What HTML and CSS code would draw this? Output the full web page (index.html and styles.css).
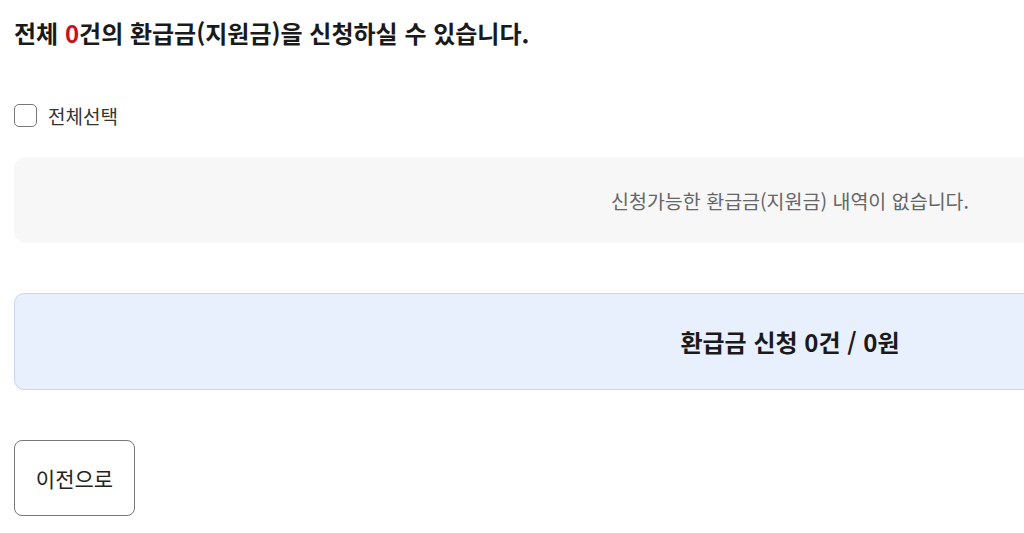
FILE: index.html
```html
<!DOCTYPE html>
<html lang="ko">
<head>
<meta charset="utf-8">
<title>환급금 신청</title>
<link rel="stylesheet" href="styles.css">
</head>
<body>
<main class="page">
  <h1 class="title">전체 <span class="count">0</span>건의 환급금(지원금)을 신청하실 수 있습니다.</h1>
  <label class="check-all">
    <span class="box"></span>
    <span class="check-label">전체선택</span>
  </label>
  <div class="empty">신청가능한 환급금(지원금) 내역이 없습니다.</div>
  <div class="summary">환급금 신청 0건 / 0원</div>
  <button class="prev" type="button">이전으로</button>
</main>
</body>
</html>
```
FILE: styles.css
```css
html, body {
  margin: 0;
  padding: 0;
  background: #fff;
  overflow: hidden;
}
body {
  font-family: "Noto Sans CJK KR", "Noto Sans", sans-serif;
  color: #222;
}
.page {
  width: 1552px;
  padding: 15px 0 0 14px;
  display: flex;
  flex-direction: column;
  align-items: flex-start;
}
.title {
  margin: 0;
  font-size: 24px;
  line-height: 36px;
  font-weight: 700;
  color: #1a1a1a;
}
.count {
  color: #c8101e;
}
.check-all {
  margin-top: 51px;
  display: flex;
  align-items: center;
  gap: 11px;
  height: 26px;
}
.box {
  width: 23px;
  height: 23px;
  border: 1px solid #777;
  border-radius: 5px;
  box-sizing: border-box;
  background: #fff;
}
.check-label {
  font-size: 19px;
  color: #333;
}
.empty {
  margin-top: 29px;
  width: 100%;
  height: 86px;
  box-sizing: border-box;
  background: #f7f7f7;
  border-radius: 12px;
  display: flex;
  align-items: center;
  justify-content: center;
  font-size: 19.5px;
  color: #666;
}
.summary {
  margin-top: 50px;
  width: 100%;
  height: 97px;
  box-sizing: border-box;
  background: #e8f0fe;
  border: 1px solid #c8d6ee;
  border-radius: 10px;
  display: flex;
  align-items: center;
  justify-content: center;
  font-size: 24px;
  font-weight: 700;
  color: #1a1a1a;
}
.prev {
  margin-top: 50px;
  width: 121px;
  height: 76px;
  background: #fff;
  border: 1px solid #777;
  border-radius: 8px;
  font-family: inherit;
  font-size: 21px;
  color: #222;
  padding: 0;
}
```
